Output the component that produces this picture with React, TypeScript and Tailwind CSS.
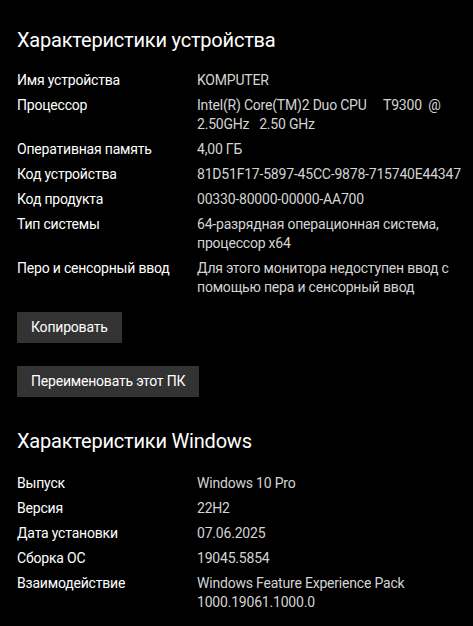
const device: [string, string[]][] = [
  ["Имя устройства", ["KOMPUTER"]],
  ["Процессор", ["Intel(R) Core(TM)2 Duo CPU\u00a0\u00a0\u00a0\u00a0\u00a0T9300\u00a0\u00a0@", "2.50GHz\u00a0\u00a0\u00a02.50 GHz"]],
  ["Оперативная память", ["4,00 ГБ"]],
  ["Код устройства", ["81D51F17-5897-45CC-9878-715740E44347"]],
  ["Код продукта", ["00330-80000-00000-AA700"]],
  ["Тип системы", ["64-разрядная операционная система,", "процессор x64"]],
  ["Перо и сенсорный ввод", ["Для этого монитора недоступен ввод с", "помощью пера и сенсорный ввод"]],
];

const windows: [string, string[]][] = [
  ["Выпуск", ["Windows 10 Pro"]],
  ["Версия", ["22H2"]],
  ["Дата установки", ["07.06.2025"]],
  ["Сборка ОС", ["19045.5854"]],
  ["Взаимодействие", ["Windows Feature Experience Pack", "1000.19061.1000.0"]],
];

function Rows({ items }: { items: [string, string[]][] }) {
  return (
    <div className="flex flex-col gap-[6px]">
      {items.map(([label, value]) => (
        <div key={label} className="flex text-[14px] leading-[19px] tracking-[-0.2px]">
          <div className="w-[180px] shrink-0 text-white">{label}</div>
          <div className="text-[#d4d4d4]">
            {value.map((line) => (
              <div key={line} className="whitespace-pre">{line}</div>
            ))}
          </div>
        </div>
      ))}
    </div>
  );
}

export default function App() {
  return (
    <div
      className="min-h-screen w-full bg-black pl-[17px] pt-[26px] text-white"
      style={{ fontFamily: 'Roboto, "Noto Sans", sans-serif' }}
    >
      <div className="text-[20px] leading-[28px] tracking-[-0.2px]">Характеристики устройства</div>
      <div className="mt-[17px]">
        <Rows items={device} />
      </div>
      <div className="mt-[15px] flex flex-col items-start gap-[23px]">
        <button className="h-[31px] bg-[#333333] px-[14px] text-[14px] tracking-[-0.2px] text-white">
          Копировать
        </button>
        <button className="h-[31px] bg-[#333333] px-[14px] text-[14px] tracking-[-0.2px] text-white">
          Переименовать этот ПК
        </button>
      </div>
      <div className="mt-[30px] text-[20px] leading-[28px] tracking-[-0.2px]">Характеристики Windows</div>
      <div className="mt-[19px]">
        <Rows items={windows} />
      </div>
    </div>
  );
}
